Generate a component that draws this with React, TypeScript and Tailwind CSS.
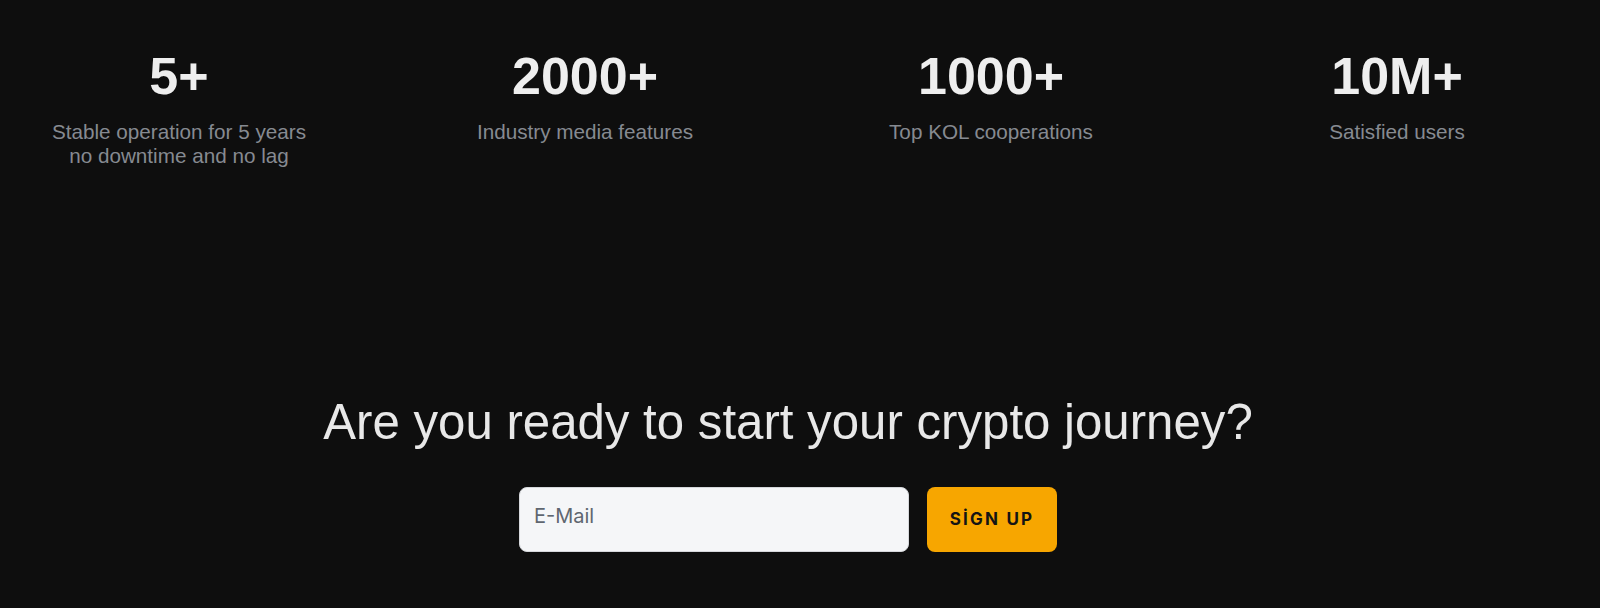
const stats = [
  { value: "5+", label: ["Stable operation for 5 years", "no downtime and no lag"] },
  { value: "2000+", label: ["Industry media features"] },
  { value: "1000+", label: ["Top KOL cooperations"] },
  { value: "10M+", label: ["Satisfied users"] },
];

const StatItem: React.FC<{ value: string; label: string[] }> = ({ value, label }) => (
  <div className="flex flex-col items-center text-center">
    <h2 className="text-[52px] leading-[50px] font-bold text-[#eeeeee]">{value}</h2>
    <p className="mt-[19px] text-[20.7px] leading-[24px] text-[#868a91]">
      {label.map((line, i) => (
        <span key={i} className="block">
          {line}
        </span>
      ))}
    </p>
  </div>
);

export default function App() {
  return (
    <div
      className="min-h-[608px] w-full bg-[#0e0e0e] pr-6"
      style={{ fontFamily: '"Liberation Sans", Arial, sans-serif' }}
    >
      <section className="grid grid-cols-4 gap-12 pt-[51px]">
        {stats.map((s) => (
          <StatItem key={s.value} value={s.value} label={s.label} />
        ))}
      </section>

      <section className="mt-[230px] flex flex-col items-center pb-[57px]">
        <h1 className="text-[49.2px] leading-[48px] text-[#e8e8e8]">
          Are you ready to start your crypto journey?
        </h1>
        <form className="mt-[41px] flex gap-[18px]" onSubmit={(e) => e.preventDefault()}>
          <textarea
            placeholder="E-Mail"
            rows={1}
            className="h-[65px] w-[390px] resize-none rounded-lg border border-[#d5d7db] bg-[#f5f6f8] px-[14px] pt-[13px] text-[20px] text-[#222] placeholder:text-[#5f6670] outline-none"
            style={{ fontFamily: 'Inter, "Noto Sans", sans-serif' }}
          />
          <button
            type="submit"
            className="h-[65px] w-[130px] rounded-lg bg-[#f7a600] text-[17px] font-bold tracking-[0.13em] text-[#141414]"
            style={{ fontFamily: 'Inter, "Noto Sans", sans-serif' }}
          >
            SİGN UP
          </button>
        </form>
      </section>
    </div>
  );
}
